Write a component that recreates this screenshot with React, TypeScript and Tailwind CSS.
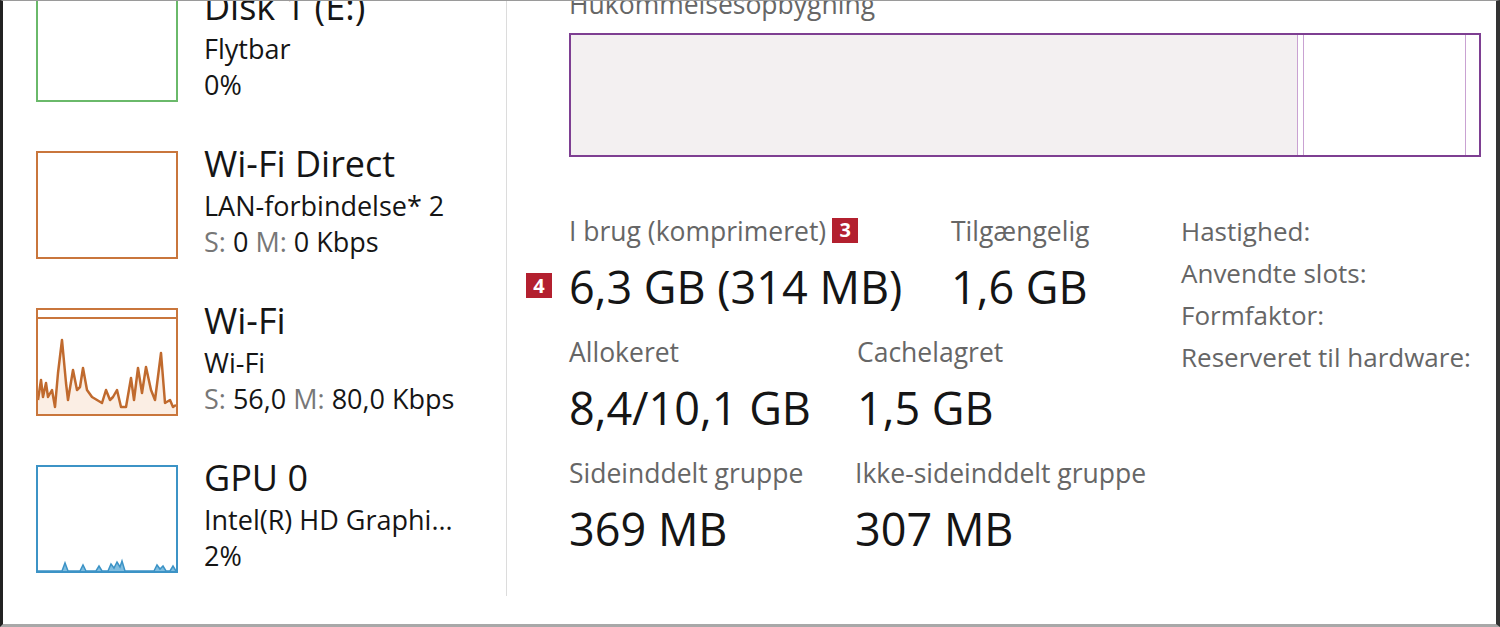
import React from "react";

const font = { fontFamily: '"Segoe UI", "Open Sans", "Noto Sans", sans-serif' };

function WifiChart() {
  const pts =
    "0,90 3,70 5,87 8,73 10,87 14,80 17,97 20,63 24,30 28,73 30,90 35,60 39,80 42,77 45,58 49,80 54,87 59,90 64,93 68,80 72,90 75,87 79,80 83,97 88,97 93,68 96,90 100,58 104,83 108,57 113,80 117,90 123,43 127,93 132,90 135,97 138,95";
  return (
    <svg viewBox="0 0 138 104" className="h-full w-full" preserveAspectRatio="none">
      <line x1="0" y1="8" x2="138" y2="8" stroke="#c9763c" strokeWidth="2" />
      <polygon points={`0,104 ${pts} 138,104`} fill="#fbeee4" />
      <polyline points={pts} fill="none" stroke="#c06a2e" strokeWidth="2.5" strokeLinejoin="round" />
    </svg>
  );
}

function GpuChart() {
  const pts =
    "0,104 24,104 27,96 30,104 42,104 45,98 48,104 58,104 61,99 64,104 70,104 73,97 76,101 79,95 82,100 84,94 87,104 116,104 119,98 122,102 125,99 128,104 132,104 135,99 138,104";
  return (
    <svg viewBox="0 0 138 104" className="h-full w-full" preserveAspectRatio="none">
      <polygon points={pts} fill="#7fbde0" />
      <polyline points={pts} fill="none" stroke="#3c93c6" strokeWidth="1.5" />
    </svg>
  );
}

const SidebarItem: React.FC<{
  title: string;
  sub: string;
  third: React.ReactNode;
  border: string;
  chart?: React.ReactNode;
}> = ({ title, sub, third, border, chart }) => (
  <div className="flex h-[108px] shrink-0 items-start">
    <div className={`h-[108px] w-[142px] shrink-0 border-2 bg-white ${border}`}>{chart}</div>
    <div className="ml-[26px] -mt-[5px] flex flex-col text-[#151515]">
      <div className="text-[36px] leading-[36px]">{title}</div>
      <div className="mt-[6px] text-[27px] leading-[36px]">{sub}</div>
      <div className="text-[27px] leading-[36px]">{third}</div>
    </div>
  </div>
);

const Badge: React.FC<{ n: string; className?: string }> = ({ n, className }) => (
  <span
    className={`inline-flex h-[25px] w-[26px] items-center justify-center bg-[#b3202f] text-[20px] font-bold leading-none text-white ${className ?? ""}`}
  >
    {n}
  </span>
);

const Stat: React.FC<{ label: React.ReactNode; value: React.ReactNode }> = ({ label, value }) => (
  <div className="flex flex-col">
    <div className="flex items-center text-[26.5px] leading-[30px] text-[#666]">{label}</div>
    <div className="relative mt-[16px] text-[45px] leading-[50px] text-[#151515]">{value}</div>
  </div>
);

export default function App() {
  return (
    <div
      style={font}
      className="flex h-[627px] w-[1500px] overflow-hidden border-t border-b-[3px] border-l-[3px] border-r-[4px] border-t-[#9a9a9a] border-b-[#a8a8a8] border-l-[#222] border-r-[#333] bg-white"
    >
      {/* left list */}
      <div className="flex h-[595px] w-[504px] shrink-0 flex-col gap-[49px] overflow-hidden border-r border-[#dcdcdc] pl-[33px]">
        <div className="-mt-[7px]">
          <SidebarItem title="Disk 1 (E:)" sub="Flytbar" third="0%" border="border-[#6ab96a]" />
        </div>
        <SidebarItem
          title="Wi-Fi Direct"
          sub="LAN-forbindelse* 2"
          border="border-[#c9763c]"
          third={
            <>
              <span className="text-[#777]">S:</span> 0 <span className="text-[#777]">M:</span> 0 Kbps
            </>
          }
        />
        <SidebarItem
          title="Wi-Fi"
          sub="Wi-Fi"
          border="border-[#c9763c]"
          chart={<WifiChart />}
          third={
            <>
              <span className="text-[#777]">S:</span> 56,0 <span className="text-[#777]">M:</span> 80,0 Kbps
            </>
          }
        />
        <SidebarItem title="GPU 0" sub="Intel(R) HD Graphi..." third="2%" border="border-[#3c93c6]" chart={<GpuChart />} />
      </div>

      {/* right panel */}
      <div className="flex flex-1 flex-col pl-[62px]">
        <div className="-mt-[13px] text-[26.5px] leading-[32px] text-[#666]">Hukommelsesopbygning</div>
        <div className="mt-[13px] flex h-[124px] w-[912px] border-2 border-[#7e3f92]">
          <div className="w-[726px] bg-[#f3f0f1]" />
          <div className="w-[7px] border-x border-[#c9a2d2]" />
          <div className="flex-1 bg-white" />
          <div className="w-px bg-[#c9a2d2]" />
          <div className="w-[13px]" />
        </div>

        <div className="mt-[59px] flex items-start">
          <div className="flex w-[612px] flex-col gap-[25px]">
            <div className="flex">
              <div className="w-[382px]">
                <Stat
                  label={
                    <>
                      I brug (komprimeret)
                      <Badge n="3" className="ml-[6px] -mt-[2px]" />
                    </>
                  }
                  value={
                    <>
                      <Badge n="4" className="absolute -left-[43px] top-[11px]" />
                      6,3 GB (314 MB)
                    </>
                  }
                />
              </div>
              <Stat label="Tilgængelig" value="1,6 GB" />
            </div>
            <div className="flex">
              <div className="w-[288px]">
                <Stat label="Allokeret" value="8,4/10,1 GB" />
              </div>
              <Stat label="Cachelagret" value="1,5 GB" />
            </div>
            <div className="flex">
              <div className="w-[286px]">
                <Stat label="Sideinddelt gruppe" value="369 MB" />
              </div>
              <Stat label="Ikke-sideinddelt gruppe" value="307 MB" />
            </div>
          </div>
          <div className="-mt-[6px] flex flex-col text-[26px] leading-[42px] text-[#666]">
            <div>Hastighed:</div>
            <div>Anvendte slots:</div>
            <div>Formfaktor:</div>
            <div>Reserveret til hardware:</div>
          </div>
        </div>
      </div>
    </div>
  );
}
